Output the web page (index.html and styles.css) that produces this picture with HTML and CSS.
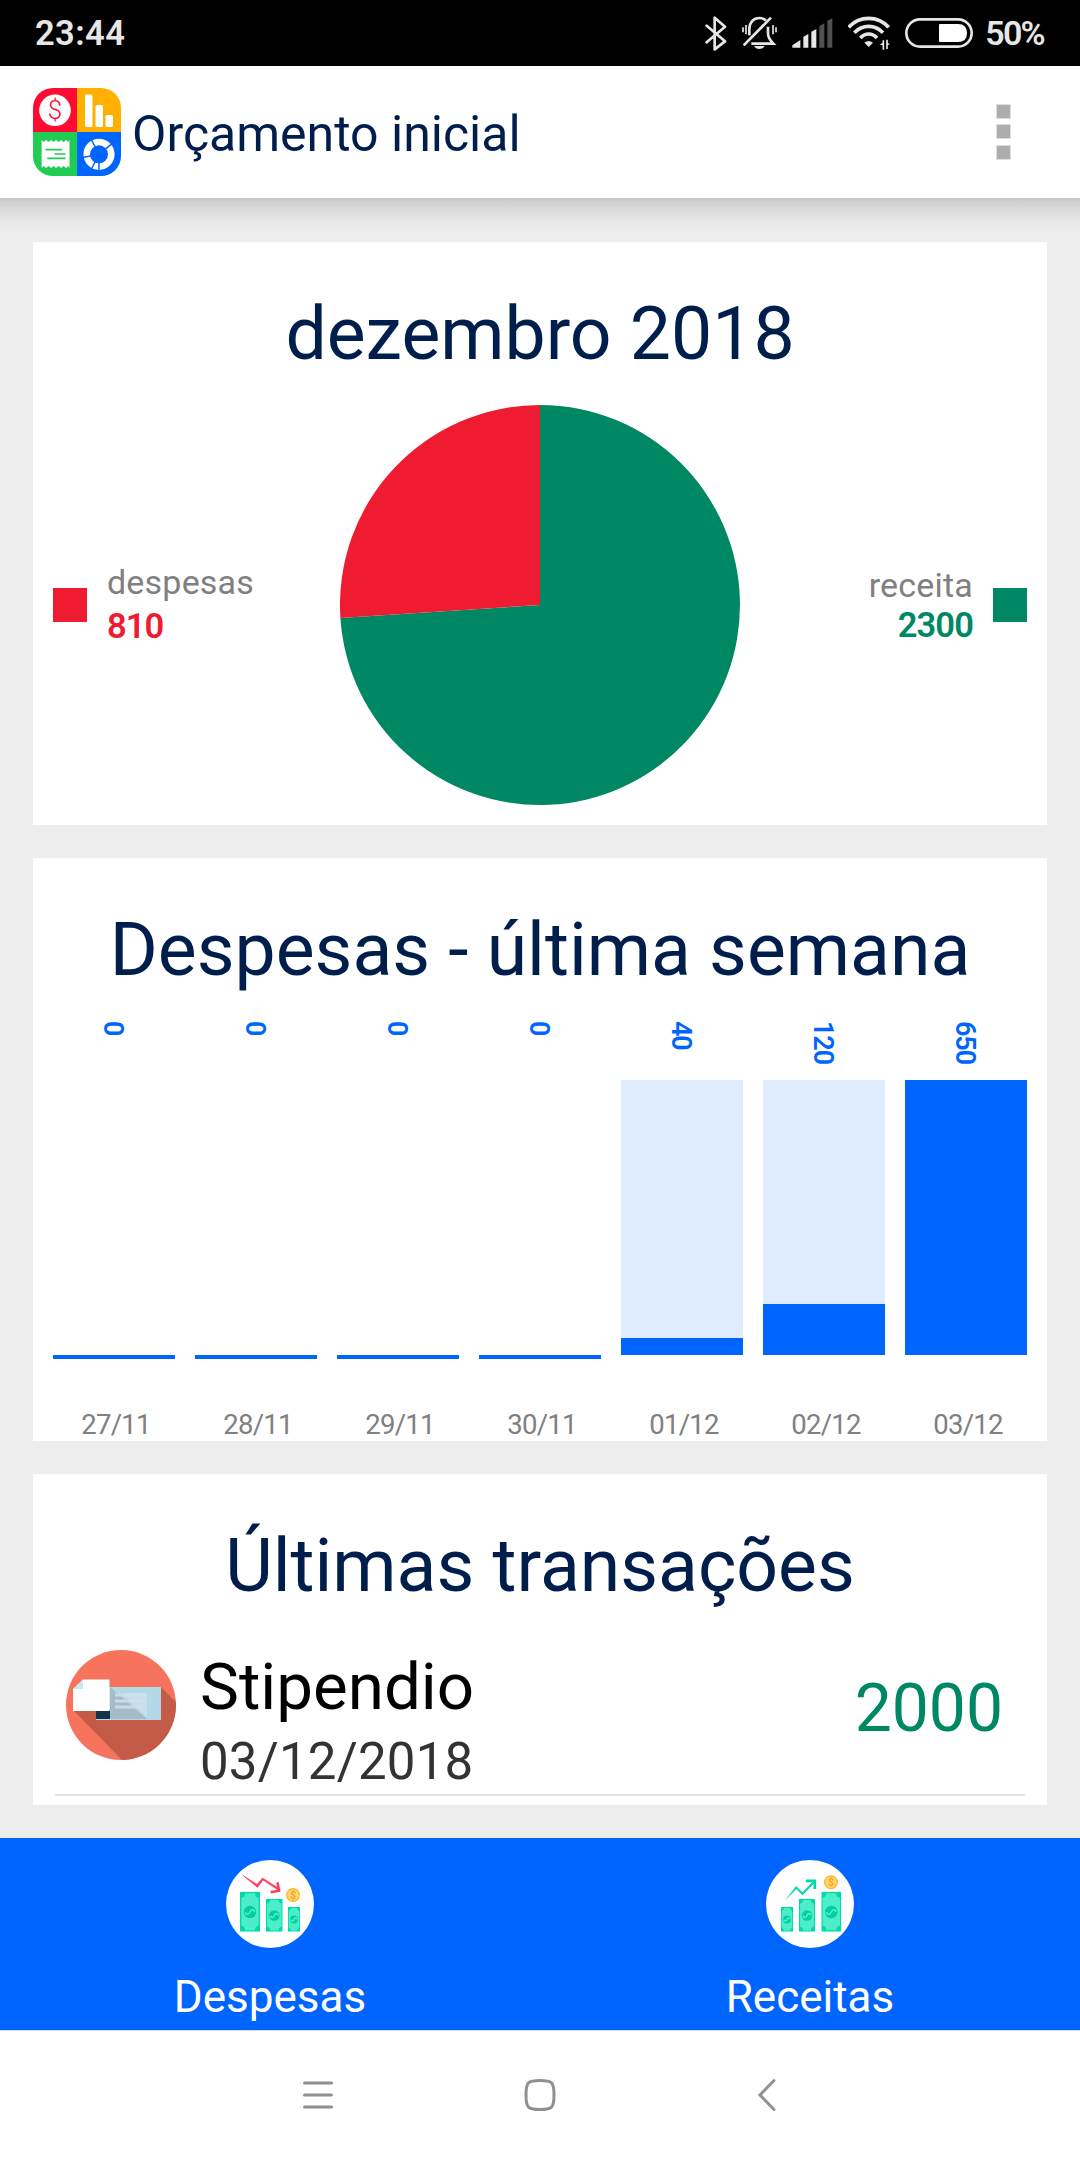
FILE: index.html
```html
<!DOCTYPE html>
<html lang="pt">
<head>
  <meta charset="UTF-8" />
  <meta name="viewport" content="width=device-width, initial-scale=1.0"/>
  <title>Orçamento inicial</title>
  <link rel="stylesheet" href="styles.css">
</head>
<body>

  <div class="status-bar">
    <span class="clock">23:44</span>
    <div class="status-icons">
      <!-- bluetooth -->
      <svg width="22" height="35" viewBox="0 0 66 105" fill="none" stroke="#e6e6e6" stroke-width="8" stroke-linejoin="round" stroke-linecap="round">
        <path d="M5 29 60 76 29 100V5L60 32 5 79"/>
      </svg>
      <!-- bell off -->
      <svg width="35" height="34" viewBox="0 0 105 102" fill="none" stroke="#e6e6e6" stroke-width="8">
        <path d="M22 58V40C22 18 36 6 52 6c8 0 14 2 20 8M78 32v20c0 12 5 20 16 31H28"/>
        <path d="M87 5 5 88"/>
        <path d="M3 34v15M12 27v28M93 27v28M102 34v15" stroke-width="5"/>
        <path d="M36 90h32q-5 9-16 9t-16-9z" fill="#e6e6e6" stroke="none"/>
      </svg>
      <!-- signal -->
      <svg width="41" height="30" viewBox="0 0 123 90" fill="#e6e6e6">
        <path d="M1 89V82L25 66V89zM34 89V56L49 48V89zM58 89V41L73 33V89z"/>
        <path d="M82 89V24L97 16V89zM106 89V8L121 1V89z" fill="#505050"/>
      </svg>
      <!-- wifi -->
      <svg width="42" height="34" viewBox="0 0 126 102" fill="none" stroke="#e6e6e6" stroke-width="11">
        <path d="M2 34C34-2 90-2 122 34M19 50c24-25 62-25 86 0M37 66c14-16 36-16 50 0"/>
        <path d="M49 80q13-10 26 0L62 93z" fill="#e6e6e6" stroke="none"/>
        <path d="M106 73v28M117 71v28" stroke-width="5"/>
        <path d="M95 87h11v-8zM117 86h9l-9 -8z" fill="#e6e6e6" stroke="none"/>
      </svg>
      <!-- battery -->
      <svg width="68" height="30" viewBox="0 0 204 90">
        <rect x="4" y="4" width="196" height="82" rx="41" fill="none" stroke="#e6e6e6" stroke-width="8"/>
        <path d="M105 18h54q27 0 27 27t-27 27h-54q-3 0-3-3V21q0-3 3-3z" fill="#fff"/>
      </svg>
      <span class="battery-text">50%</span>
    </div>
  </div>

  <header class="app-bar">
    <svg class="logo" viewBox="0 0 88 88">
      <clipPath id="logoClip"><rect width="88" height="88" rx="20"/></clipPath>
      <g clip-path="url(#logoClip)">
        <rect width="44" height="44" fill="#ff0a33"/>
        <rect x="44" width="44" height="44" fill="#ffb000"/>
        <rect y="44" width="44" height="44" fill="#21cc55"/>
        <rect x="44" y="44" width="44" height="44" fill="#0064ff"/>
      </g>
      <circle cx="22" cy="22.3" r="15.8" fill="#fff"/>
      <text class="logo-dollar" x="22" y="31" text-anchor="middle">$</text>
      <g fill="#fff">
        <rect x="52" y="6.5" width="7.5" height="32.5" rx="1.5"/>
        <rect x="62.5" y="17" width="7.5" height="22" rx="1.5"/>
        <rect x="72.5" y="27" width="7.5" height="12" rx="1.5"/>
        <path d="M8.6 52l2 2 2.5-2 2.5 2 2.5-2 2.5 2 2.5-2 2.5 2 2.5-2 2.5 2 2.5-2 2 2 1.400-2V80l-1.400-2-2 2-2.500-2-2.500 2-2.500-2-2.500 2-2.500-2-2.500 2-2.500-2-2.500 2-2.500-2-2 2z"/>
      </g>
      <path d="M12.500 61.700H29M21.400 66H32.500M14.300 70.300H32.500" stroke="#21cc55" stroke-width="1.7"/>
      <circle cx="66" cy="66.3" r="12.3" fill="none" stroke="#fff" stroke-width="6.6"/>
      <path d="M66 66.3L79 55.6M66 66.3L58.5 52M66 66.3L49.5 69.5M66 66.3L58.4 81M66 66.3V83" stroke="#0064ff" stroke-width="1.5"/>
    </svg>
    <h1>Orçamento inicial</h1>
    <div class="menu-dots"><i></i><i></i><i></i></div>
  </header>

  <main>
    <section class="card">
      <h2>dezembro 2018</h2>
      <div class="pie-row">
        <div class="legend expense">
          <span class="swatch"></span>
          <div class="legend-text">
            <span class="label">despesas</span>
            <b>810</b>
          </div>
        </div>
        <svg class="pie" viewBox="-200 -200 400 400">
          <path d="M0 0V-200A200 200 0 1 1 -199.6 13z" fill="#008764"/>
          <path d="M0 0V-200A200 200 0 0 0 -199.6 13z" fill="#ef1b31"/>
        </svg>
        <div class="legend income">
          <div class="legend-text">
            <span class="label">receita</span>
            <b>2300</b>
          </div>
          <span class="swatch"></span>
        </div>
      </div>
    </section>

    <section class="card">
      <h2>Despesas - última semana</h2>
      <div class="bars">
        <div class="day"><span class="value">0</span><div class="track zero"></div><span class="date">27/11</span></div>
        <div class="day"><span class="value">0</span><div class="track zero"></div><span class="date">28/11</span></div>
        <div class="day"><span class="value">0</span><div class="track zero"></div><span class="date">29/11</span></div>
        <div class="day"><span class="value">0</span><div class="track zero"></div><span class="date">30/11</span></div>
        <div class="day"><span class="value">40</span><div class="track"><div class="fill" style="height: 6.15%"></div></div><span class="date">01/12</span></div>
        <div class="day"><span class="value">120</span><div class="track"><div class="fill" style="height: 18.46%"></div></div><span class="date">02/12</span></div>
        <div class="day"><span class="value">650</span><div class="track"><div class="fill" style="height: 100%"></div></div><span class="date">03/12</span></div>
      </div>
    </section>

    <section class="card">
      <h2>Últimas transações</h2>
      <div class="transaction">
        <svg class="category" viewBox="0 0 110 110">
          <clipPath id="catClip"><circle cx="55" cy="55" r="55"/></clipPath>
          <g clip-path="url(#catClip)">
            <rect width="110" height="110" fill="#f6745e"/>
            <path d="M8 61L58 112H112V54L95 37z" fill="#c45b49"/>
          </g>
          <rect x="30" y="37" width="65" height="33" fill="#b3d9e8"/>
          <path d="M44 37L81 69H44z" fill="#a5bcc6"/>
          <path d="M49 45H80M49 51H81M49 57H81" stroke="#c9dce5" stroke-width="3"/>
          <path d="M56 43l25 24V43z" fill="#d2e5ed" opacity=".6"/>
          <rect x="30" y="60" width="14" height="9" fill="#12344b"/>
          <path d="M17 29.5H43.5V61H7V39z" fill="#fff"/>
          <path d="M17 29.5V39H7z" fill="#c2e9f4"/>
        </svg>
        <div class="details">
          <span class="name">Stipendio</span>
          <span class="when">03/12/2018</span>
        </div>
        <span class="amount">2000</span>
      </div>
    </section>
  </main>

  <nav class="tabs">
    <svg width="0" height="0" class="defs">
      <symbol id="bill" viewBox="0 0 20 40" preserveAspectRatio="none">
        <rect width="20" height="40" fill="#00dba5"/>
        <path d="M5 1.5H15Q15 5.5 18.7 6V34Q15 34.5 15 38.5H5Q5 34.5 1.3 34V6Q5 5.5 5 1.5z" fill="#4beec9"/>
      </symbol>
    </svg>
    <a class="tab">
      <svg viewBox="0 0 88 88">
        <circle cx="44" cy="44" r="44" fill="#fff"/>
        <use href="#bill" x="14" y="31.7" width="20" height="40"/>
        <use href="#bill" x="40" y="38.7" width="16.7" height="33"/>
        <use href="#bill" x="62" y="47" width="12" height="24.7"/>
        <g fill="#00cfa0">
          <circle cx="24" cy="52" r="6.2"/>
          <circle cx="48.3" cy="55.5" r="5.2"/>
          <circle cx="68" cy="59.5" r="3.9"/>
        </g>
        <g fill="none" stroke="#58edcb" stroke-width="1.4">
          <path d="M19.5 52c0 3 3.5 3 4.5 0s4.5-3 4.5 0"/>
          <path d="M44.5 55.5c0 2.6 3 2.6 3.8 0s3.8-2.6 3.8 0"/>
          <path d="M65.2 59.5c0 2 2.2 2 2.8 0s2.8-2 2.8 0"/>
        </g>
        <circle cx="67" cy="35" r="6.3" fill="#ffd973" stroke="#ffb92e" stroke-width="1.4"/>
        <text class="coin" x="67" y="38.8" text-anchor="middle">$</text>
        <path d="M17 15.5L31.5 27.5 37 20 52 30 53 28.5 36.5 18 31 24.5z" fill="#ff3e5b" stroke="#ff3e5b" stroke-width=".6"/>
        <path d="M51.5 22.2L53 30.7 44.7 32.2" fill="none" stroke="#ff3e5b" stroke-width="2.6"/>
      </svg>
      <span>Despesas</span>
    </a>
    <a class="tab">
      <svg viewBox="0 0 88 88">
        <circle cx="44" cy="44" r="44" fill="#fff"/>
        <use href="#bill" x="15" y="47" width="12" height="24.7"/>
        <use href="#bill" x="33" y="38.7" width="16" height="33"/>
        <use href="#bill" x="55.3" y="31.7" width="20" height="40"/>
        <g fill="#00cfa0">
          <circle cx="21" cy="59.5" r="3.9"/>
          <circle cx="41" cy="55.5" r="5.2"/>
          <circle cx="65.3" cy="52" r="6.2"/>
        </g>
        <g fill="none" stroke="#58edcb" stroke-width="1.4">
          <path d="M18.2 59.5c0 2 2.2 2 2.8 0s2.8-2 2.8 0"/>
          <path d="M37.2 55.5c0 2.6 3 2.6 3.8 0s3.8-2.6 3.8 0"/>
          <path d="M60.8 52c0 3 3.5 3 4.5 0s4.5-3 4.5 0"/>
        </g>
        <circle cx="65" cy="22.3" r="6.3" fill="#ffd973" stroke="#ffb92e" stroke-width="1.4"/>
        <text class="coin" x="65" y="26.1" text-anchor="middle">$</text>
        <path d="M18.5 41L30 26 36.5 32.3 48 20.5 49.5 22 36.5 35.3 30.3 29z" fill="#00dba5"/>
        <path d="M40 20.9H48.8V29" fill="none" stroke="#00dba5" stroke-width="2.6"/>
      </svg>
      <span>Receitas</span>
    </a>
  </nav>

  <footer class="system-nav">
    <svg viewBox="0 0 32 34"><path d="M2.5 5H29.5M2.5 17H29.5M2.5 29H29.5"/></svg>
    <svg viewBox="0 0 32 34"><path d="M16 2.5C28 2.5 30 4 30 17S28 31.5 16 31.5 2 30 2 17 4 2.5 16 2.5z"/></svg>
    <svg viewBox="0 0 32 34"><path d="M28 2.5L14 17 28 31.5"/></svg>
  </footer>

</body>
</html>
```

FILE: styles.css
```css
:root {
  --blue: #0064ff;
  --navy: #001e4b;
  --red: #ef1b31;
  --green: #008764;
  --page-bg: #ededed;
  --grey-text: #808080;
}

* {
  box-sizing: border-box;
  margin: 0;
  padding: 0;
}

body {
  width: 1080px;
  height: 2160px;
  overflow: hidden;
  display: flex;
  flex-direction: column;
  background-color: var(--page-bg);
  font-family: Roboto, sans-serif;
}

svg {
  display: block;
  flex: none;
}

.status-bar {
  height: 66px;
  padding: 0 36px 0 35px;
  display: flex;
  align-items: center;
  justify-content: space-between;
  background-color: #000;
  color: #e6e6e6;
  font-size: 34.5px;
  font-weight: 600;
  line-height: 68px;
}

.clock {
  letter-spacing: 0.4px;
}

.status-icons {
  display: flex;
  align-items: center;
  gap: 15px;
}

.battery-text {
  margin-left: -3px;
  font-size: 34px;
  letter-spacing: -1.7px;
  line-height: 68px;
}

.app-bar {
  height: 132px;
  padding: 0 69px 0 33px;
  display: flex;
  align-items: center;
  background-color: #fff;
}

.logo {
  width: 88px;
  height: 88px;
}

.logo-dollar {
  font-size: 26px;
  font-weight: 300;
  fill: #ff0a33;
}

h1 {
  flex: 1;
  margin-left: 11px;
  padding-top: 4px;
  font-size: 50px;
  font-weight: 400;
  line-height: 132px;
  color: var(--navy);
}

.menu-dots {
  margin-bottom: 1px;
  display: grid;
  gap: 5.5px;
}

.menu-dots i {
  width: 15px;
  height: 15px;
  background-color: #adadad;
  border: 1px solid #dedede;
}

main {
  flex: 1;
  padding: 44px 33px 33px;
  display: flex;
  flex-direction: column;
  gap: 33px;
  background: linear-gradient(#c2c2c2, #cfcfcf 3px, #dcdcdc 12px, #e6e6e6 22px, var(--page-bg) 36px);
}

.card {
  height: 583px;
  padding: 21px 20px 0;
  background-color: #fff;
}

.card:last-child {
  height: 331px;
}

h2 {
  font-size: 73.3px;
  font-weight: 400;
  line-height: 142px;
  text-align: center;
  color: var(--navy);
}

.pie-row {
  display: grid;
  grid-template-columns: 1fr 400px 1fr;
  align-items: center;
}

.pie {
  width: 400px;
  height: 400px;
}

.legend {
  display: flex;
  align-items: center;
  gap: 20px;
}

.legend.income {
  justify-content: flex-end;
  text-align: right;
}

.swatch {
  width: 34px;
  height: 34px;
  background-color: currentColor;
}

.expense {
  color: var(--red);
}

.income {
  color: var(--green);
}

.legend-text {
  display: flex;
  flex-direction: column;
}

.legend-text b {
  font-size: 34.5px;
  font-weight: 600;
  letter-spacing: -0.9px;
  line-height: 46px;
}

.income b {
  line-height: 39px;
}

.label {
  color: var(--grey-text);
  font-size: 34px;
  letter-spacing: 0.2px;
  line-height: 41px;
}

.bars {
  display: grid;
  grid-template-columns: repeat(7, 122px);
  gap: 20px;
}

.day {
  display: grid;
  grid-template-rows: 59px 275px 86px;
  justify-items: center;
}

.value {
  writing-mode: vertical-rl;
  margin-right: 3px;
  font-size: 27px;
  font-weight: 600;
  letter-spacing: -1.1px;
  line-height: 40px;
  color: var(--blue);
}

.track {
  width: 100%;
  display: flex;
  align-items: flex-end;
  background-color: #dfebff;
}

.track.zero {
  margin-bottom: -4px;
  background: none;
  border-bottom: 4px solid var(--blue);
}

.fill {
  width: 100%;
  background-color: var(--blue);
}

.date {
  align-self: end;
  padding-left: 4px;
  font-size: 27.5px;
  letter-spacing: -0.7px;
  line-height: 32px;
  color: var(--grey-text);
}

.transaction {
  height: 159px;
  margin: 0 2px;
  padding: 0 22px 0 11px;
  display: flex;
  align-items: center;
  border-bottom: 2px solid #e4e4e4;
}

.category {
  width: 110px;
  height: 110px;
  margin-bottom: 21px;
}

.details {
  flex: 1;
  margin-left: 24px;
  padding-top: 13px;
  display: flex;
  flex-direction: column;
}

.name {
  font-size: 65.5px;
  line-height: 79px;
  color: #000;
}

.when {
  font-size: 51px;
  letter-spacing: 0.2px;
  line-height: 72px;
  color: #333;
}

.amount {
  font-size: 66px;
  line-height: 80px;
  margin-bottom: 13px;
  color: var(--green);
}

.tabs {
  height: 192px;
  display: flex;
  background-color: var(--blue);
}

.defs {
  position: absolute;
}

.tab {
  flex: 1;
  padding-top: 22px;
  display: flex;
  flex-direction: column;
  align-items: center;
  color: #fff;
  font-size: 44px;
  line-height: 98px;
}

.tab svg {
  width: 88px;
  height: 88px;
}

.coin {
  font-size: 10px;
  font-weight: 700;
  fill: #f5a623;
}

.system-nav {
  height: 130px;
  border-top: 1px solid #dcdcdc;
  padding: 0 302px 1px;
  display: flex;
  align-items: center;
  justify-content: space-between;
  background-color: #fff;
}

.system-nav svg {
  width: 32px;
  height: 34px;
  fill: none;
  stroke: #909090;
  stroke-width: 3;
  stroke-linecap: round;
}
```
